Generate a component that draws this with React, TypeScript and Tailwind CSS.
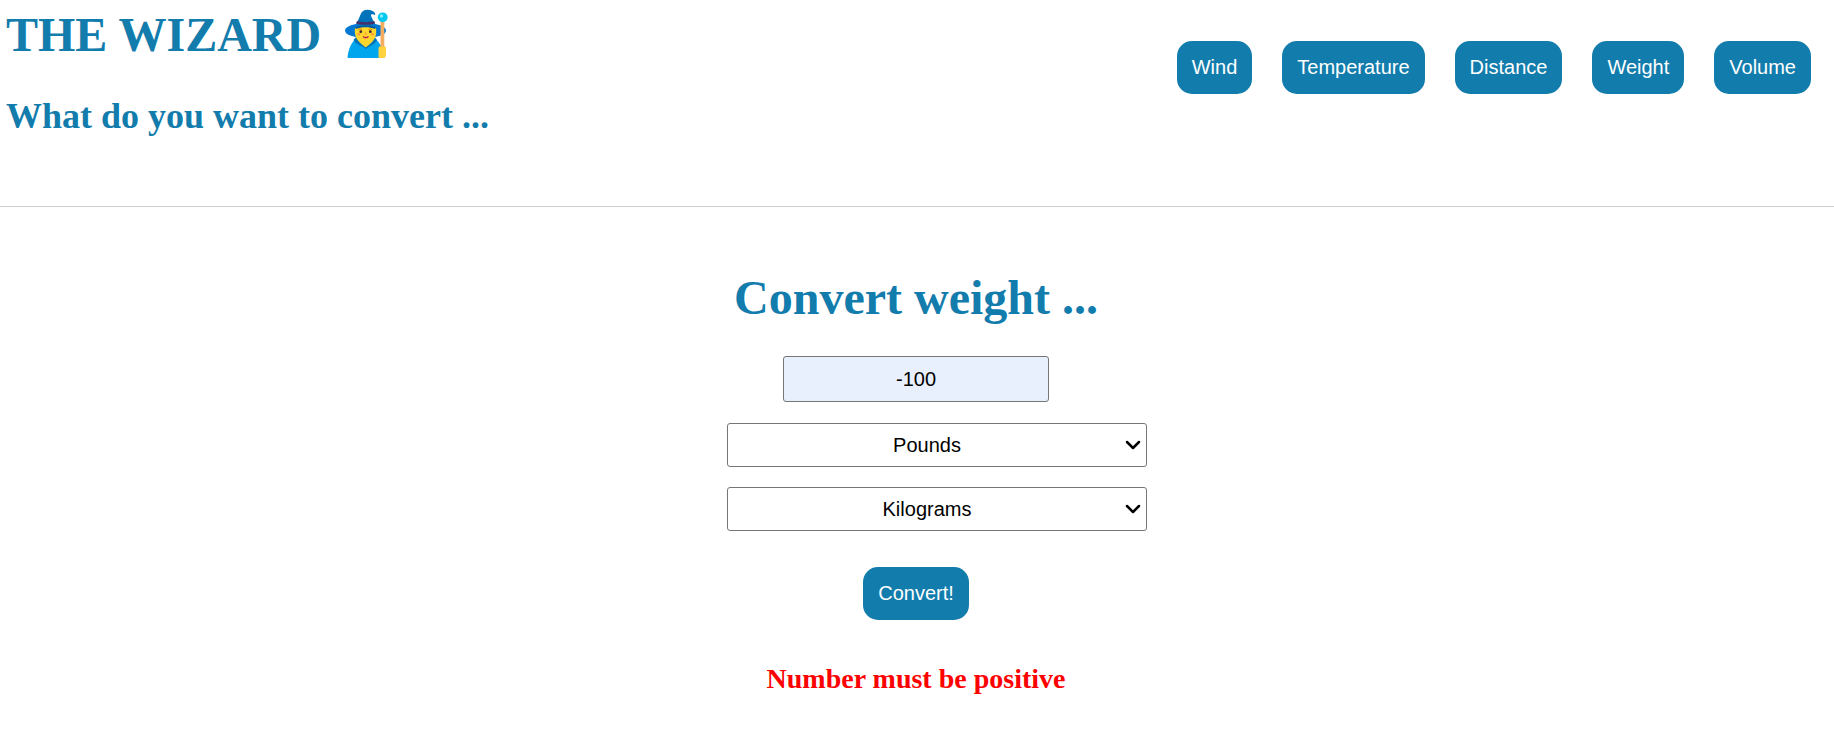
import { useState } from "react";
import { ChevronDown } from "lucide-react";

const categories = ["Wind", "Temperature", "Distance", "Weight", "Volume"];
const units = ["Pounds", "Kilograms", "Ounces", "Grams"];

const buttonClass =
  "cursor-pointer rounded-[15px] bg-[#127cac] p-[15px] text-xl leading-[23px] text-white";

function WizardIcon() {
  return (
    <svg viewBox="0 0 43 49" className="mt-0.5 h-[49px] w-[43px]" role="img" aria-label="Wizard">
      <ellipse cx="20.500" cy="21.500" rx="20.500" ry="7.500" fill="#0078d4" />
      <path d="M2.500 49 C3 41 6 33.500 11 30 H30 C35 33 39 41 39.500 49 Z" fill="#00a6ed" />
      <path d="M8.500 31 C11 36 18 37 21 40 C24 37 30 36 32 31 L29 27 H12 Z" fill="#0074ba" />
      <path d="M10 19 C12 17 29 17 31 19 C32 27 30 32 20.700 38.500 C11.500 32 9 27 10 19 Z" fill="#ffd62e" />
      <path d="M10 18.500 C15 15.500 26 15.500 31 18.500 L30 20 C25 17.500 16 17.500 11 20 Z" fill="#005a9e" />
      <path
        d="M11.500 15 L16 4.500 C17.500 0 25 -0.500 29 3 C31 5 30.500 6.500 28.500 5.500 C26 4.700 25.500 6 26.500 8 L30 15 C25 17 16 17 11.500 15 Z"
        fill="#0074ba"
      />
      <path d="M12 12 C17 13.500 24 13.500 29.300 12 L30.200 14.500 C25 16.200 16 16.200 11 14.500 Z" fill="#46306b" />
      <path d="M13.500 20.500 Q15.500 19.200 17 20.500 M23.500 20.500 Q25.500 19.200 27 20.500" stroke="#d67d00" strokeWidth="1" fill="none" />
      <circle cx="15.800" cy="22.700" r="1.400" fill="#402a32" />
      <circle cx="25.300" cy="22.700" r="1.400" fill="#402a32" />
      <circle cx="14" cy="25.200" r="1.300" fill="#ff9b3c" />
      <circle cx="27.300" cy="25.200" r="1.300" fill="#ff9b3c" />
      <path d="M20.700 22.500 L22 25.500 H19.500 Z" fill="#ff9b3c" />
      <path d="M18 27.500 Q20.700 30 23.500 27.500" stroke="#bb1d50" strokeWidth="1.500" fill="none" />
      <rect x="35.500" y="11" width="3.800" height="30" fill="#f3ad61" />
      <circle cx="37.700" cy="8.300" r="4.900" fill="#00c8ee" />
      <circle cx="36.500" cy="7" r="1.700" fill="#8beaff" />
      <path d="M33.500 39 Q33.500 37.500 35 37.500 H40 Q41 37.500 41 38.500 V46 Q40.700 49 38 49 H33.500 Z" fill="#ffd23e" />
    </svg>
  );
}

function UnitSelect({ label, initial }: { label: string; initial: string }) {
  const [unit, setUnit] = useState(initial);
  return (
    <div className="relative ml-[42px] w-[420px] max-w-full">
      <select
        aria-label={label}
        value={unit}
        onChange={(event) => setUnit(event.target.value)}
        className="block h-11 w-full appearance-none rounded-[3px] border border-[#767676] bg-white pr-5 text-center text-xl text-black"
      >
        {units.map((name) => (
          <option key={name}>{name}</option>
        ))}
      </select>
      <ChevronDown
        aria-hidden="true"
        strokeWidth={2.5}
        className="pointer-events-none absolute inset-y-0 right-0.5 my-auto size-6 text-black"
      />
    </div>
  );
}

export default function App() {
  const [amount, setAmount] = useState("-100");
  return (
    <div className="bg-white font-['Liberation_Sans',Arial,sans-serif]">
      <header className="flex flex-wrap items-start justify-between border-b border-[#ccc] pt-[7px] pr-[23px] pb-[70px] pl-1.5">
        <div className="font-['Liberation_Serif','Times_New_Roman',serif] font-bold text-[#127cac]">
          <h1 className="flex items-start gap-6 text-5xl leading-[56px]">
            THE WIZARD <WizardIcon />
          </h1>
          <h2 className="mt-[33px] text-4xl">What do you want to convert ...</h2>
        </div>
        <nav aria-label="Conversions" className="mt-[34px] flex flex-wrap gap-[30px]">
          {categories.map((name) => (
            <button key={name} type="button" className={buttonClass}>
              {name}
            </button>
          ))}
        </nav>
      </header>
      <main>
        <form
          onSubmit={(event) => event.preventDefault()}
          className="flex flex-col items-center pt-[63px] pr-0.5"
        >
          <h2 className="font-['Liberation_Serif','Times_New_Roman',serif] text-5xl leading-[56px] font-bold text-[#127cac]">
            Convert weight ...
          </h2>
          <input
            type="text"
            aria-label="Amount"
            value={amount}
            onChange={(event) => setAmount(event.target.value)}
            className="mt-[30px] h-[46px] w-[266px] rounded-[3px] border border-[#767676] bg-[#e8f0fe] text-center text-xl text-black"
          />
          <div className="mt-[21px] flex w-full flex-col items-center gap-5">
            <UnitSelect label="From unit" initial="Pounds" />
            <UnitSelect label="To unit" initial="Kilograms" />
          </div>
          <button type="submit" className={`mt-9 ${buttonClass}`}>
            Convert!
          </button>
          <p
            role="alert"
            className="mt-[43px] font-['Liberation_Serif','Times_New_Roman',serif] text-[28px] leading-8 font-bold text-[#ff0000]"
          >
            Number must be positive
          </p>
        </form>
      </main>
    </div>
  );
}
